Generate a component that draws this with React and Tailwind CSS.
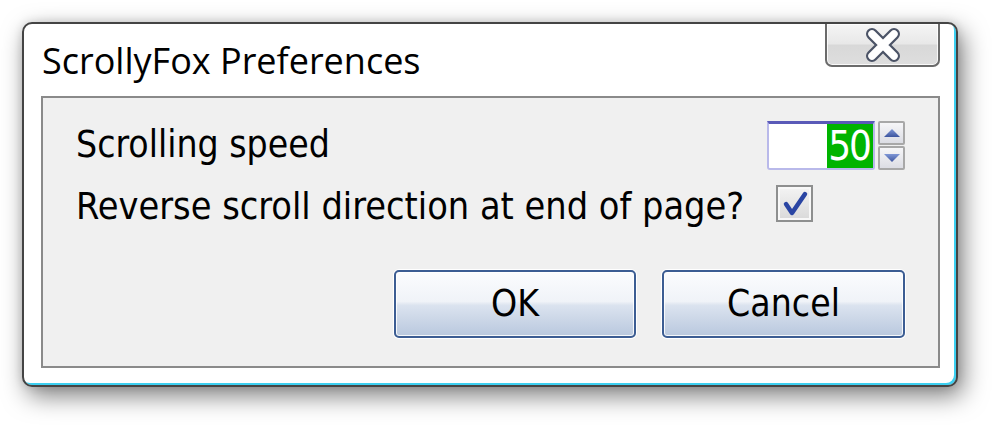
import React from "react";

const tahoma = "font-['DejaVu_Sans_Condensed','DejaVu_Sans',sans-serif]";

function CloseX() {
  return (
    <svg width="40" height="34" viewBox="0 0 40 34">
      <path d="M9 6 L31 28 M31 6 L9 28" stroke="#4b5366" strokeWidth="12" strokeLinecap="round" fill="none" />
      <path d="M9 6 L31 28 M31 6 L9 28" stroke="#ffffff" strokeWidth="7.5" strokeLinecap="round" fill="none" />
    </svg>
  );
}

function Arrow({ up }) {
  return (
    <svg width="18" height="10" viewBox="0 0 18 10">
      <defs>
        <linearGradient id={up ? "au" : "ad"} x1="0" y1="0" x2="0" y2="1">
          <stop offset="0" stopColor="#7f97d6" />
          <stop offset="1" stopColor="#3d559f" />
        </linearGradient>
      </defs>
      <path d={up ? "M1 9 L9 1 L17 9 Z" : "M1 1 L17 1 L9 9 Z"} fill={`url(#${up ? "au" : "ad"})`} />
    </svg>
  );
}

function VistaButton({ children, w }) {
  return (
    <div className={`${w} h-[68px] rounded-[5px] border-2 border-[#3c5d93] shadow-[0_0_0_1px_#ffffff,inset_0_0_0_1px_rgba(255,255,255,0.85)] bg-[linear-gradient(to_bottom,#fbfcfe_0%,#f0f3f8_46%,#dbe3ef_52%,#b9c8de_100%)] flex items-center justify-center`}>
      <span className={`${tahoma} text-[37px] leading-none text-black`}>{children}</span>
    </div>
  );
}

export default function App() {
  return (
    <div className="w-[1000px] h-[429px] bg-white pt-[22px] pl-[22px] overflow-hidden">
      <div className="w-[936px] h-[365px] rounded-[10px] border-2 border-[#444444] bg-white shadow-[inset_-2px_-2px_0_#3ccff0,5px_9px_24px_rgba(0,0,0,0.5),0_0_10px_rgba(0,0,0,0.12)] flex flex-col pl-[17px] pr-[16px] pb-[17px]">
        <div className="h-[72px] flex justify-between items-start">
          <span className="pt-[17px] pl-[1px] font-['Open_Sans','Noto_Sans',sans-serif] text-[36px] leading-[40px] text-black">
            ScrollyFox Preferences
          </span>
          <div className="w-[115px] h-[43px] border-2 border-t-0 border-[#6b6b6b] rounded-b-[7px] bg-[linear-gradient(to_bottom,#f5f5f5_0%,#e8e8e8_48%,#d8d8d8_52%,#dedede_100%)] shadow-[inset_0_0_0_1px_rgba(255,255,255,0.8)] flex items-center justify-center">
            <CloseX />
          </div>
        </div>
        <div className="flex-1 border-2 border-[#8a8a8a] bg-[#f0f0f0] px-[33px] pt-[23px] flex flex-col">
          <div className="h-[50px] flex justify-between items-start">
            <span className={`${tahoma} mt-[5px] text-[37px] leading-none text-black`}>Scrolling speed</span>
            <div className="flex gap-[3px]">
              <div className="w-[108px] h-[49px] bg-white border-2 border-t-[3px] border-[#b9b9ea] border-t-[#5a5ab8] rounded-b-[3px] flex justify-end items-stretch">
                <span className={`${tahoma} bg-[#00b400] text-white text-[40px] leading-[44px] tracking-[-2px] pl-[1px] pr-[3px]`}>50</span>
              </div>
              <div className="flex flex-col gap-[1px]">
                <div className="w-[27px] h-[24px] border-2 border-[#a8a8a8] rounded-[2px] bg-[linear-gradient(to_bottom,#f6f6f8,#dcdde4)] flex items-center justify-center">
                  <Arrow up />
                </div>
                <div className="w-[27px] h-[24px] border-2 border-[#a8a8a8] rounded-[2px] bg-[linear-gradient(to_bottom,#f6f6f8,#dcdde4)] flex items-center justify-center">
                  <Arrow />
                </div>
              </div>
            </div>
          </div>
          <div className="mt-[14px] flex items-start">
            <span className={`${tahoma} w-[700px] shrink-0 mt-[3px] text-[37.5px] leading-none text-black whitespace-nowrap`}>
              Reverse scroll direction at end of page?
            </span>
            <div className="w-[37px] h-[37px] border-2 border-[#8e8f8f] bg-[linear-gradient(to_bottom,#f4f4f4,#d9d9d9)] shadow-[inset_0_0_0_2px_#f8f8f8] flex items-center justify-center">
              <svg width="33" height="33" viewBox="0 0 33 33">
                <path d="M8 17 L14 26 L27 7" stroke="#2a45a3" strokeWidth="4.5" strokeLinecap="round" strokeLinejoin="round" fill="none" />
              </svg>
            </div>
          </div>
          <div className="mt-[44px] flex justify-end gap-[26px]">
            <VistaButton w="w-[242px]">OK</VistaButton>
            <VistaButton w="w-[243px]">Cancel</VistaButton>
          </div>
        </div>
      </div>
    </div>
  );
}
